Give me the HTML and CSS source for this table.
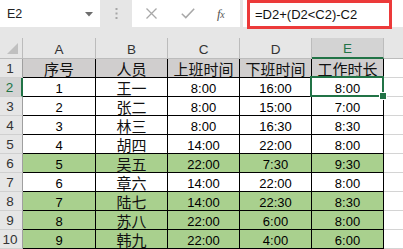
FILE: index.html
```html
<!DOCTYPE html>
<html lang="zh">
<head>
<meta charset="utf-8">
<link rel="stylesheet" href="styles.css">
</head>
<body>
<div class="app">
  <div class="toolbar">
    <div class="namebox">
      <span class="name">E2</span>
      <svg class="caret" width="8" height="5" viewBox="0 0 8 5"><path d="M0 0H8L4 4.5Z" fill="#6d6d6d"/></svg>
    </div>
    <div class="grip">
      <svg width="3" height="11" viewBox="0 0 3 11"><rect x="0.5" y="0" width="2" height="2" fill="#a6a6a6"/><rect x="0.5" y="4.5" width="2" height="2" fill="#a6a6a6"/><rect x="0.5" y="9" width="2" height="2" fill="#a6a6a6"/></svg>
    </div>
    <div class="btns">
      <svg class="icon-x" width="11" height="11" viewBox="0 0 11 11"><path d="M0.5 0.5L10.5 10.5M10.5 0.5L0.5 10.5" stroke="#a8a8a8" stroke-width="1.3" fill="none"/></svg>
      <svg class="icon-ok" width="14" height="11" viewBox="0 0 14 11"><path d="M0.8 5.8L4.8 9.6L13.2 0.8" stroke="#a8a8a8" stroke-width="1.5" fill="none"/></svg>
      <span class="fx"><i>f</i><i class="x">x</i></span>
    </div>
    <div class="formula">
      <div class="mark">=D2+(D2&lt;C2)-C2</div>
    </div>
  </div>

  <div class="sheet">
    <div class="corner"><svg width="11" height="11" viewBox="0 0 11 11"><path d="M11 0V11H0Z" fill="#c0c0c0"/></svg></div>
    <div class="ch">A</div><div class="ch">B</div><div class="ch">C</div><div class="ch">D</div><div class="ch sel">E</div><div class="ch last"></div>

    <div class="rh">1</div>
    <div class="c th cn">序号</div><div class="c th cn">人员</div><div class="c th cn">上班时间</div><div class="c th cn">下班时间</div><div class="c th cn">工作时长</div><div class="f"></div>

    <div class="rh sel">2</div>
    <div class="c">1</div><div class="c cn">王一</div><div class="c">8:00</div><div class="c">16:00</div><div class="c active">8:00</div><div class="f"></div>

    <div class="rh">3</div>
    <div class="c">2</div><div class="c cn">张二</div><div class="c">8:00</div><div class="c">15:00</div><div class="c">7:00</div><div class="f"></div>

    <div class="rh">4</div>
    <div class="c">3</div><div class="c cn">林三</div><div class="c">8:00</div><div class="c">16:30</div><div class="c">8:30</div><div class="f"></div>

    <div class="rh">5</div>
    <div class="c">4</div><div class="c cn">胡四</div><div class="c">14:00</div><div class="c">22:00</div><div class="c">8:00</div><div class="f"></div>

    <div class="rh">6</div>
    <div class="c g">5</div><div class="c g cn">吴五</div><div class="c g">22:00</div><div class="c g">7:30</div><div class="c g">9:30</div><div class="f"></div>

    <div class="rh">7</div>
    <div class="c">6</div><div class="c cn">章六</div><div class="c">14:00</div><div class="c">22:00</div><div class="c">8:00</div><div class="f"></div>

    <div class="rh">8</div>
    <div class="c g">7</div><div class="c g cn">陆七</div><div class="c g">14:00</div><div class="c g">22:30</div><div class="c g">8:30</div><div class="f"></div>

    <div class="rh">9</div>
    <div class="c g">8</div><div class="c g cn">苏八</div><div class="c g">22:00</div><div class="c g">6:00</div><div class="c g">8:00</div><div class="f"></div>

    <div class="rh">10</div>
    <div class="c g">9</div><div class="c g cn">韩九</div><div class="c g">22:00</div><div class="c g">4:00</div><div class="c g">6:00</div><div class="f"></div>
  </div>
</div>
</body>
</html>
```

FILE: styles.css
```css
* { box-sizing: border-box; }
html, body { margin: 0; padding: 0; }
body {
  width: 403px;
  height: 249px;
  overflow: hidden;
  background: #e6e6e6;
  font-family: "Liberation Sans", "Noto Sans CJK SC", sans-serif;
  color: #000;
}
.app { width: 403px; }

.toolbar {
  display: flex;
  height: 28px;
  margin-bottom: 10px;
}
.namebox {
  width: 100px;
  height: 27px;
  background: #fff;
  display: flex;
  align-items: center;
  padding-left: 7px;
  padding-right: 7px;
  justify-content: space-between;
}
.name { font-size: 12.5px; color: #222; }
.caret { margin-top: 1px; }
.grip {
  width: 32px;
  display: flex;
  justify-content: center;
  padding-top: 8px;
  padding-left: 1px;
}
.grip svg { display: block; }
.btns {
  width: 108px;
  height: 27px;
  background: #fff;
  display: flex;
  align-items: center;
  padding-left: 14px;
}
.icon-x { margin-right: 24px; }
.icon-ok { margin-right: 22px; }
.fx {
  font-family: "Liberation Serif", serif;
  font-size: 13px;
  color: #555;
  letter-spacing: -0.5px;
}
.fx .x { font-size: 10px; }
.formula {
  flex: 1;
  margin-left: 3px;
  height: 27px;
  background: #fff;
  padding-left: 4px;
}
.mark {
  width: 145px;
  height: 29px;
  border: 3px solid #ec3a3a;
  font-size: 13px;
  line-height: 23px;
  padding-left: 5px;
  color: #111;
}

.sheet {
  display: grid;
  grid-template-columns: 23px 73px 72px 72px 72px 72px 1fr;
  grid-template-rows: 21px repeat(10, 19px);
}
.corner {
  background: #e6e6e6;
  border-right: 1px solid #bcbcbc;
  border-bottom: 1px solid #bcbcbc;
  display: flex;
  align-items: flex-end;
  justify-content: flex-end;
  padding: 0 4px 4px 0;
}
.corner svg { display: block; }
.ch {
  background: #e6e6e6;
  border-right: 1px solid #bcbcbc;
  border-bottom: 1px solid #bcbcbc;
  font-size: 13.5px;
  color: #333;
  display: flex;
  align-items: center;
  justify-content: center;
  padding-top: 2px;
}
.ch.last { border-right: none; }
.ch.sel {
  background: #d3d3d3;
  color: #217346;
  border-bottom: 2px solid #217346;
}
.rh {
  background: #e6e6e6;
  border-right: 1px solid #9f9f9f;
  border-bottom: 1px solid #d0d0d0;
  font-size: 13.5px;
  color: #333;
  display: flex;
  align-items: center;
  justify-content: center;
  padding-top: 1px;
  padding-right: 2px;
}
.rh.sel {
  background: #d3d3d3;
  color: #217346;
  border-right: 2px solid #217346;
}
.c {
  background: #fff;
  border-right: 1px solid #000;
  border-bottom: 1px solid #000;
  font-size: 13px;
  display: flex;
  align-items: center;
  justify-content: center;
  padding-top: 2px;
  white-space: nowrap;
}
.c.cn { font-size: 15px; padding-top: 1px; color: #111; }
.c.th { background: #d0cece; }
.c.g { background: #a9d08e; }
.f {
  background: #fff;
  border-bottom: 1px solid #d4d4d4;
}
.active { position: relative; }
.active::after {
  content: "";
  position: absolute;
  left: -2px;
  top: -2px;
  right: -1px;
  bottom: -1px;
  border: 2px solid #217346;
}
.active::before {
  content: "";
  position: absolute;
  right: -4px;
  bottom: -4px;
  width: 6px;
  height: 6px;
  background: #217346;
  border: 1px solid #fff;
  z-index: 2;
}
```
